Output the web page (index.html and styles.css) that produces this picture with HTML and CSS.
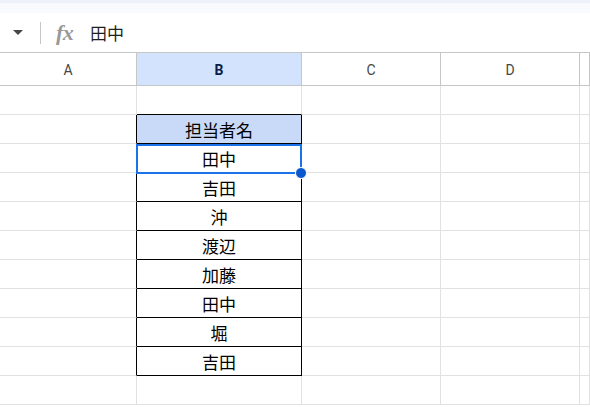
FILE: index.html
```html
<!DOCTYPE html>
<html lang="ja">
<head>
    <meta charset="UTF-8">
    <title>Sheet</title>
    <link rel="stylesheet" href="styles.css">
</head>
<body>

    <div class="topbar"></div>

    <div class="formula-bar">
        <span class="name-arrow"></span>
        <span class="divider"></span>
        <span class="fx">fx</span>
        <span class="formula-text">田中</span>
    </div>

    <div class="sheet">
        <div class="row head">
            <div class="cell a">A</div>
            <div class="cell b active">B</div>
            <div class="cell c">C</div>
            <div class="cell d">D</div>
            <div class="cell e"></div>
        </div>
        <div class="row">
            <div class="cell a"></div>
            <div class="cell b box-top"></div>
            <div class="cell c"></div>
            <div class="cell d"></div>
            <div class="cell e"></div>
        </div>
        <div class="row">
            <div class="cell a edge"></div>
            <div class="cell b boxed title">担当者名</div>
            <div class="cell c"></div>
            <div class="cell d"></div>
            <div class="cell e"></div>
        </div>
        <div class="row">
            <div class="cell a edge"></div>
            <div class="cell b boxed">田中</div>
            <div class="cell c"></div>
            <div class="cell d"></div>
            <div class="cell e"></div>
        </div>
        <div class="row">
            <div class="cell a edge"></div>
            <div class="cell b boxed">吉田</div>
            <div class="cell c"></div>
            <div class="cell d"></div>
            <div class="cell e"></div>
        </div>
        <div class="row">
            <div class="cell a edge"></div>
            <div class="cell b boxed">沖</div>
            <div class="cell c"></div>
            <div class="cell d"></div>
            <div class="cell e"></div>
        </div>
        <div class="row">
            <div class="cell a edge"></div>
            <div class="cell b boxed">渡辺</div>
            <div class="cell c"></div>
            <div class="cell d"></div>
            <div class="cell e"></div>
        </div>
        <div class="row">
            <div class="cell a edge"></div>
            <div class="cell b boxed">加藤</div>
            <div class="cell c"></div>
            <div class="cell d"></div>
            <div class="cell e"></div>
        </div>
        <div class="row">
            <div class="cell a edge"></div>
            <div class="cell b boxed">田中</div>
            <div class="cell c"></div>
            <div class="cell d"></div>
            <div class="cell e"></div>
        </div>
        <div class="row">
            <div class="cell a edge"></div>
            <div class="cell b boxed">堀</div>
            <div class="cell c"></div>
            <div class="cell d"></div>
            <div class="cell e"></div>
        </div>
        <div class="row">
            <div class="cell a edge"></div>
            <div class="cell b boxed">吉田</div>
            <div class="cell c"></div>
            <div class="cell d"></div>
            <div class="cell e"></div>
        </div>
        <div class="row">
            <div class="cell a"></div>
            <div class="cell b"></div>
            <div class="cell c"></div>
            <div class="cell d"></div>
            <div class="cell e"></div>
        </div>

        <div class="selection"><span class="handle"></span></div>
    </div>

</body>
</html>
```

FILE: styles.css
```css
body { margin: 0; background: white; font-family: "Noto Sans CJK JP", "Noto Sans", sans-serif; overflow: hidden; }

.topbar { height: 3px; background: #edf2fa; border-bottom: 10px solid #f8fafd; }

.formula-bar { height: 39px; display: flex; align-items: center; border-bottom: 1px solid #c4c7c5; }
.name-arrow { margin-left: 13px; width: 0; height: 0; border-left: 5px solid transparent; border-right: 5px solid transparent; border-top: 5px solid #444746; }
.divider { margin-left: 17px; width: 1px; height: 22px; background: #c4c7c5; }
.fx { margin-left: 15px; width: 34px; font-family: "Liberation Serif", serif; font-style: italic; font-weight: bold; font-size: 22px; color: #999999; letter-spacing: -0.5px; }
.formula-text { font-size: 17px; color: #1f1f1f; }

.sheet { position: relative; }
.row { display: flex; height: 29px; }
.row.head { height: 33px; }

.cell { box-sizing: border-box; border-right: 1px solid #e1e1e1; border-bottom: 1px solid #e1e1e1; display: flex; align-items: center; justify-content: center; font-size: 17px; color: #000; }
.cell.a { width: 137px; }
.cell.b { width: 165px; }
.cell.c { width: 139px; }
.cell.d { width: 139px; }
.cell.e { flex: 1; }

.head .cell { border-right-color: #c4c7c5; border-bottom-color: #c4c7c5; font-family: Roboto, "Liberation Sans", sans-serif; font-size: 14px; color: #444746; padding-top: 1px; }
.head .active { background: #d3e3fd; color: #0b1d4a; font-weight: bold; }

.edge { border-right-color: #000; }
.box-top { border-bottom-color: #000; }
.boxed { border-right-color: #000; border-bottom-color: #000; }
.title { background: #c9daf8; }

.selection { position: absolute; left: 136px; top: 91px; width: 166px; height: 30px; box-sizing: border-box; border: 2px solid #1a73e8; }
.handle { position: absolute; right: -7px; bottom: -7px; width: 10px; height: 10px; border-radius: 50%; background: #0b57d0; border: 1px solid white; }
```
